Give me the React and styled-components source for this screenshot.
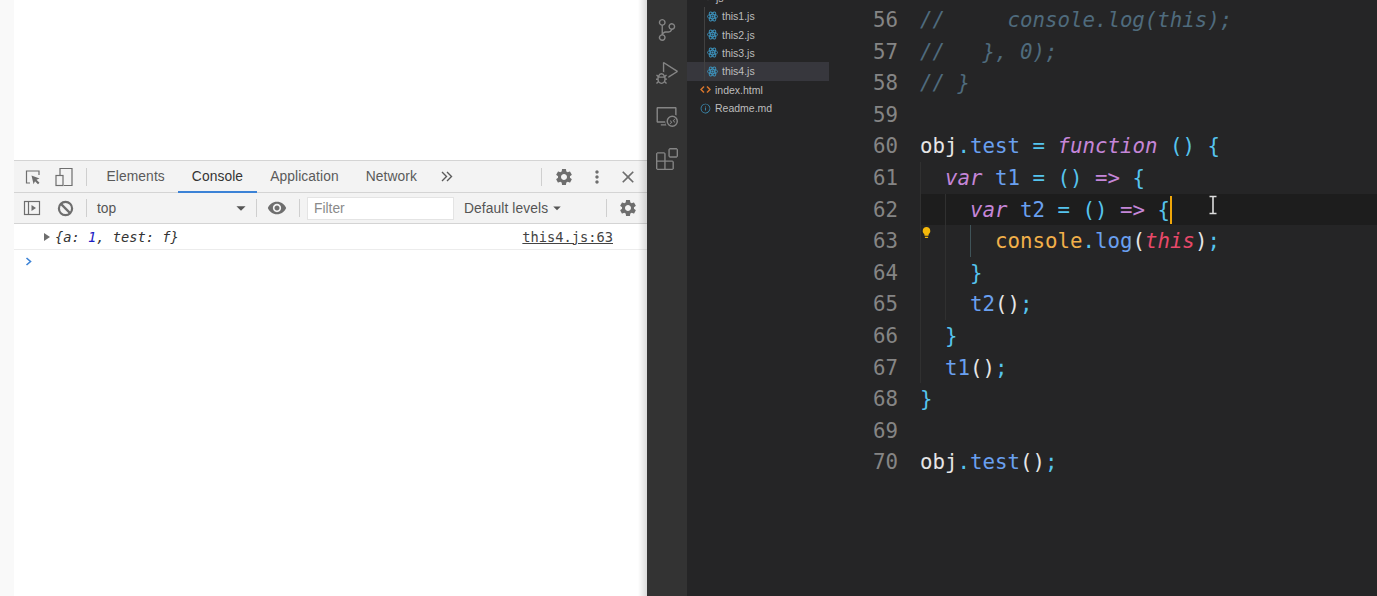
import styled, { createGlobalStyle } from 'styled-components';
import { MdSettings, MdVisibility, MdMoreVert, MdClose, MdArrowDropDown, MdLightbulb } from 'react-icons/md';
import { VscSourceControl, VscDebugAlt, VscRemoteExplorer, VscExtensions, VscInfo } from 'react-icons/vsc';

const Global = createGlobalStyle`
  html, body { margin: 0; padding: 0; height: 100%; overflow: hidden; background: #252526; }
  #root { height: 100%; }
`;

const Page = styled.div`
  display: flex;
  width: 1377px;
  height: 596px;
  overflow: hidden;
  font-family: 'Liberation Sans', Arial, sans-serif;
`;

/* browser side */
const BrowserPane = styled.div`
  width: 647px;
  flex: none;
  display: flex;
  position: relative;
  background: #fff;
  &::after {
    content: '';
    position: absolute;
    top: 0;
    bottom: 0;
    right: 0;
    width: 9px;
    background: linear-gradient(to right, rgba(0, 0, 0, 0), rgba(0, 0, 0, 0.14));
  }
`;

const SideStrip = styled.div`
  width: 14px;
  flex: none;
  background: #f9f9f9;
`;

const Browser = styled.div`
  flex: 1;
  min-width: 0;
  display: flex;
  flex-direction: column;
`;

const PageArea = styled.div`
  height: 160px;
  flex: none;
`;

const TabBar = styled.div`
  height: 31px;
  flex: none;
  display: flex;
  align-items: center;
  background: #f3f3f3;
  border-top: 1px solid #d4d4d4;
  border-bottom: 1px solid #d4d4d4;
`;

const ToolBar = styled.div`
  height: 30px;
  flex: none;
  display: flex;
  align-items: center;
  background: #f3f3f3;
  border-bottom: 1px solid #d4d4d4;
`;

const Tab = styled.div`
  height: 31px;
  box-sizing: border-box;
  padding: 1px 13.5px 0;
  margin-top: 1px;
  display: flex;
  align-items: center;
  font-size: 13.8px;
  letter-spacing: 0.1px;
  color: ${(p) => (p.$active ? '#333' : '#5a5a5a')};
  border-bottom: 2px solid ${(p) => (p.$active ? '#3b82d6' : 'transparent')};
`;

const Divider = styled.div`
  width: 1px;
  height: 18px;
  flex: none;
  background: #cfcfcf;
  margin: ${(p) => p.$margin || '0'};
`;

const ToolIcon = styled.span`
  display: flex;
  align-items: center;
  justify-content: center;
  flex: none;
  color: #6e6e6e;
  margin: ${(p) => p.$margin || '0'};
`;

const ContextSelect = styled.div`
  width: 155px;
  flex: none;
  display: flex;
  align-items: center;
  justify-content: space-between;
  font-size: 13.8px;
  color: #555;
`;

const FilterInput = styled.div`
  width: 147px;
  height: 23px;
  flex: none;
  box-sizing: border-box;
  padding-left: 6px;
  display: flex;
  align-items: center;
  background: #fff;
  border: 1px solid #e4e4e4;
  font-size: 13.8px;
  color: #8a8a8a;
`;

const Levels = styled.div`
  display: flex;
  align-items: center;
  padding-left: 10px;
  font-size: 13.8px;
  letter-spacing: 0.1px;
  color: #555;
`;

const Spacer = styled.div`
  flex: 1;
`;

const LogRow = styled.div`
  height: 25px;
  flex: none;
  display: flex;
  align-items: center;
  padding: 0 34px 0 30px;
  border-bottom: 1px solid #ececec;
  font-family: 'DejaVu Sans Mono', monospace;
  font-size: 13.7px;
`;

const Caret = styled.span`
  width: 0;
  height: 0;
  margin-right: 5px;
  border-left: 6px solid #6e6e6e;
  border-top: 4px solid transparent;
  border-bottom: 4px solid transparent;
`;

const LogValue = styled.span`
  font-style: italic;
  color: #333;
  & b {
    font-weight: normal;
    color: #1c1cc4;
  }
`;

const LogSource = styled.span`
  margin-left: auto;
  color: #444;
  text-decoration: underline;
`;

const Prompt = styled.div`
  height: 22px;
  padding-left: 11px;
  display: flex;
  align-items: center;
`;

/* editor side */
const ActivityBar = styled.div`
  width: 40px;
  flex: none;
  box-sizing: border-box;
  display: flex;
  flex-direction: column;
  align-items: center;
  padding-top: 19px;
  gap: 21px;
  background: #333;
  color: #858585;
`;

const Sidebar = styled.div`
  width: 142px;
  flex: none;
  overflow: hidden;
  background: #252526;
`;

const FileRow = styled.div`
  height: 18.4px;
  display: flex;
  align-items: center;
  gap: 4px;
  padding-left: ${(p) => (p.$nested ? '20px' : '13px')};
  font-size: 10.5px;
  color: #bdbdbd;
  background-color: ${(p) => (p.$active ? '#37373d' : 'transparent')};
  background-image: ${(p) => (p.$nested ? 'linear-gradient(#414141, #414141)' : 'none')};
  background-size: 1px 100%;
  background-position: 17px 0;
  background-repeat: no-repeat;
`;

const FolderRow = styled(FileRow)`
  margin-top: -11.4px;
  padding-left: 17px;
`;

const Editor = styled.div`
  flex: 1;
  padding-top: 4.2px;
  background: #252526;
  font-family: 'DejaVu Sans Mono', monospace;
  font-size: 20.75px;
`;

const Line = styled.div`
  height: 31.6px;
  display: flex;
  align-items: center;
  position: relative;
`;

const LineNumber = styled.span`
  width: 69px;
  flex: none;
  text-align: right;
  color: #858585;
`;

const Code = styled.code`
  margin-left: 22px;
  flex: 1;
  height: 100%;
  display: flex;
  align-items: center;
  font: inherit;
  white-space: pre;
  color: #e4e4e4;
  background: ${(p) => (p.$current ? '#1d1d1d' : 'transparent')};
`;

const Tok = styled.span`
  color: ${(p) => p.$c};
  font-style: ${(p) => (p.$i ? 'italic' : 'normal')};
`;

const Guide = styled.span`
  position: absolute;
  top: 0;
  bottom: 0;
  left: ${(p) => 91 + p.$at * 25}px;
  width: 1px;
  background: ${(p) => (p.$on ? '#3f5358' : '#303030')};
`;

const TextCursor = styled.span`
  display: inline-block;
  width: 2px;
  height: 28px;
  margin-right: -2px;
  background: #f0a70a;
`;

const Bulb = styled.span`
  position: absolute;
  left: 90.5px;
  top: 0.5px;
  display: flex;
  color: #f5b90a;
`;

const MouseBeam = styled.svg`
  position: absolute;
  left: 379px;
  top: 1.5px;
`;

const comment = '#4f6b7d';
const kw = '#c586d8';
const fn = '#6aa0f0';
const punc = '#56c4ee';
const plain = '#e6e6e6';

const Atom = () => (
  <svg width="11" height="11" viewBox="0 0 24 24" fill="none" stroke="#3d93bd" strokeWidth="2">
    <ellipse cx="12" cy="12" rx="11" ry="4.5" />
    <ellipse cx="12" cy="12" rx="11" ry="4.5" transform="rotate(60 12 12)" />
    <ellipse cx="12" cy="12" rx="11" ry="4.5" transform="rotate(120 12 12)" />
    <circle cx="12" cy="12" r="1.5" fill="#3d93bd" />
  </svg>
);

const InspectIcon = () => (
  <svg width="18" height="18" viewBox="0 0 18 18" fill="none">
    <path d="M6 15H2.5V3H15v4" stroke="#6e6e6e" strokeWidth="1.2" />
    <path d="M7.5 7.5l8 3-3 1.3 3 3-1.5 1.5-3-3-1.4 3z" fill="#6e6e6e" />
  </svg>
);

const DeviceIcon = () => (
  <svg width="18" height="20" viewBox="0 0 18 20" fill="none" stroke="#6e6e6e" strokeWidth="1.2">
    <path d="M5 8V1.5h12v17H9" />
    <rect x="1" y="8.5" width="7" height="10" />
  </svg>
);

const DrawerIcon = () => (
  <svg width="18" height="16" viewBox="0 0 18 16" fill="none">
    <rect x="1.5" y="1.5" width="15" height="13" stroke="#6e6e6e" strokeWidth="1.2" />
    <path d="M5.5 1.5v13" stroke="#6e6e6e" strokeWidth="1.2" />
    <path d="M8.5 5l4.5 3-4.5 3z" fill="#6e6e6e" />
  </svg>
);

const ClearIcon = () => (
  <svg width="17" height="17" viewBox="0 0 17 17" fill="none" stroke="#6e6e6e" strokeWidth="2.2">
    <circle cx="8.5" cy="8.5" r="6.6" />
    <path d="M3.9 3.9l9.2 9.2" />
  </svg>
);

const MoreTabsIcon = () => (
  <svg width="12" height="11" viewBox="0 0 12 11" fill="none" stroke="#5a5a5a" strokeWidth="1.4">
    <path d="M1 1l4.5 4.5L1 10M6 1l4.5 4.5L6 10" />
  </svg>
);

const HtmlIcon = () => (
  <svg width="11" height="11" viewBox="0 0 11 11" fill="none" stroke="#d9762c" strokeWidth="1.5">
    <path d="M4 2.5L1 5.5l3 3M7 2.5l3 3-3 3" />
  </svg>
);

const FolderCaret = () => (
  <svg width="8" height="8" viewBox="0 0 8 8" fill="none" stroke="#bdbdbd" strokeWidth="1.2">
    <path d="M1 2.5l3 3 3-3" />
  </svg>
);

const SPACE = ' ';

const lines = [
  { n: 56, code: [[comment, '//     console.log(this);', 1]] },
  { n: 57, code: [[comment, '//   }, 0);', 1]] },
  { n: 58, code: [[comment, '// }', 1]] },
  { n: 59, code: [] },
  {
    n: 60,
    code: [[plain, 'obj'], [punc, '.'], [fn, 'test'], [punc, ' = '], [kw, 'function', 1], [punc, ' () {']],
  },
  {
    n: 61,
    guides: [0],
    code: [[kw, '  var', 1], [plain, SPACE], [fn, 't1'], [punc, ' = () '], [kw, '=>'], [punc, ' {']],
  },
  {
    n: 62,
    current: true,
    guides: [0, 1],
    code: [[kw, '    var', 1], [plain, SPACE], [fn, 't2'], [punc, ' = () '], [kw, '=>'], [punc, ' {']],
  },
  {
    n: 63,
    guides: [0, 1, 2],
    active: 2,
    bulb: true,
    code: [['#f2b04a', '      console'], [punc, '.'], [fn, 'log'], [plain, '('], ['#e8496a', 'this', 1], [plain, ')'], [punc, ';']],
  },
  { n: 64, guides: [0, 1], code: [[punc, '    }']] },
  { n: 65, guides: [0, 1], code: [[fn, '    t2'], [plain, '()'], [punc, ';']] },
  { n: 66, guides: [0], code: [[punc, '  }']] },
  { n: 67, guides: [0], code: [[fn, '  t1'], [plain, '()'], [punc, ';']] },
  { n: 68, code: [[punc, '}']] },
  { n: 69, code: [] },
  { n: 70, code: [[plain, 'obj'], [punc, '.'], [fn, 'test'], [plain, '()'], [punc, ';']] },
];

export default function App() {
  return (
    <Page>
      <Global />
      <BrowserPane>
        <SideStrip />
        <Browser>
          <PageArea />
          <TabBar>
            <ToolIcon $margin="0 0 0 10px"><InspectIcon /></ToolIcon>
            <ToolIcon $margin="0 0 0 13px"><DeviceIcon /></ToolIcon>
            <Divider $margin="0 6px 0 13px" />
            <Tab>Elements</Tab>
            <Tab $active>Console</Tab>
            <Tab>Application</Tab>
            <Tab>Network</Tab>
            <ToolIcon $margin="0 0 0 10px"><MoreTabsIcon /></ToolIcon>
            <Spacer />
            <Divider />
            <ToolIcon $margin="0 0 0 12px"><MdSettings size={20} /></ToolIcon>
            <ToolIcon $margin="0 0 0 13px"><MdMoreVert size={20} /></ToolIcon>
            <ToolIcon $margin="0 9px 0 11px"><MdClose size={20} /></ToolIcon>
          </TabBar>
          <ToolBar>
            <ToolIcon $margin="0 0 0 9px"><DrawerIcon /></ToolIcon>
            <ToolIcon $margin="0 0 0 16px"><ClearIcon /></ToolIcon>
            <Divider $margin="0 10px 0 12px" />
            <ContextSelect>
              top
              <MdArrowDropDown size={22} />
            </ContextSelect>
            <Divider $margin="0 0 0 4px" />
            <ToolIcon $margin="0 0 0 10px"><MdVisibility size={20} /></ToolIcon>
            <Divider $margin="0 7px 0 12px" />
            <FilterInput>Filter</FilterInput>
            <Levels>
              Default levels
              <MdArrowDropDown size={18} />
            </Levels>
            <Spacer />
            <Divider />
            <ToolIcon $margin="0 9px 0 11px"><MdSettings size={20} /></ToolIcon>
          </ToolBar>
          <LogRow>
            <Caret />
            <LogValue>{'{a: '}<b>1</b>{', test: f}'}</LogValue>
            <LogSource>this4.js:63</LogSource>
          </LogRow>
          <Prompt>
            <svg width="8" height="9" viewBox="0 0 8 9" fill="none" stroke="#3b82d6" strokeWidth="1.6">
              <path d="M1.5 1l4 3.5-4 3.5" />
            </svg>
          </Prompt>
        </Browser>
      </BrowserPane>

      <ActivityBar>
        <VscSourceControl size={22} />
        <VscDebugAlt size={22} />
        <VscRemoteExplorer size={22} />
        <VscExtensions size={22} />
      </ActivityBar>

      <Sidebar>
        <FolderRow><FolderCaret />js</FolderRow>
        {['this1.js', 'this2.js', 'this3.js', 'this4.js'].map((name) => (
          <FileRow key={name} $nested $active={name === 'this4.js'}>
            <Atom />
            {name}
          </FileRow>
        ))}
        <FileRow><HtmlIcon />index.html</FileRow>
        <FileRow><VscInfo size={11} color="#3d93bd" />Readme.md</FileRow>
      </Sidebar>

      <Editor>
        {lines.map((line) => (
          <Line key={line.n}>
            <LineNumber>{line.n}</LineNumber>
            <Code $current={line.current}>
              {line.code.map(([color, text, italic]) => (
                <Tok key={text + color} $c={color} $i={italic}>{text}</Tok>
              ))}
              {line.current && <TextCursor />}
            </Code>
            {(line.guides || []).map((at) => (
              <Guide key={at} $at={at} $on={line.active === at} />
            ))}
            {line.bulb && <Bulb><MdLightbulb size={13} /></Bulb>}
            {line.current && (
              <MouseBeam width="10" height="20" viewBox="0 0 10 20" fill="none" stroke="#ddd" strokeWidth="1.6">
                <path d="M1.5 1.5h7M5 1.5v17M1.5 18.5h7" />
              </MouseBeam>
            )}
          </Line>
        ))}
      </Editor>
    </Page>
  );
}
